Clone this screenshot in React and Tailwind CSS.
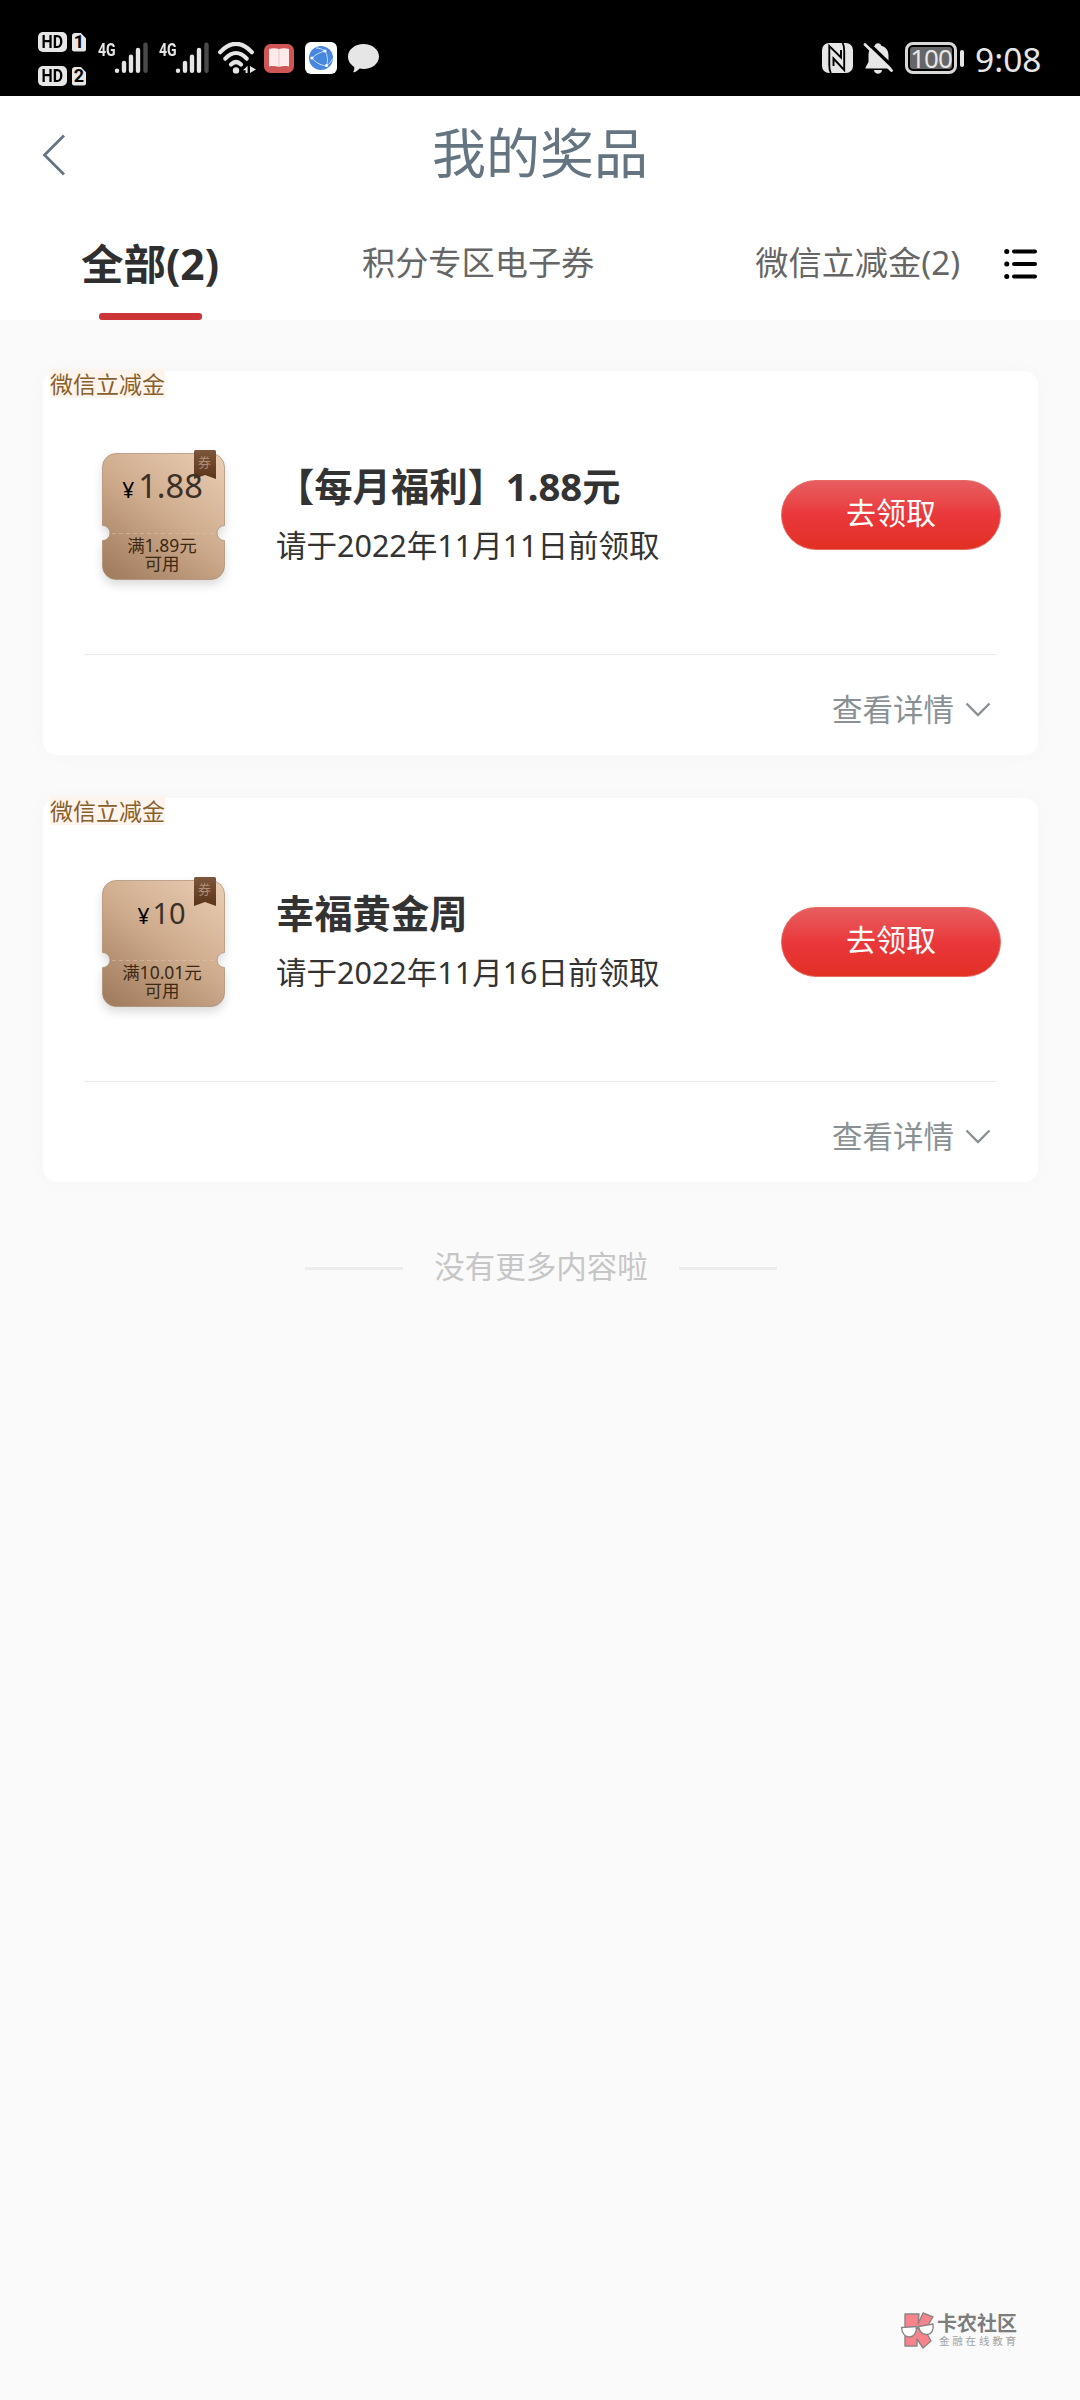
import { useState } from "react";

const tabs = [
  { id: "all",    label: "全部(2)" },
  { id: "points", label: "积分专区电子券" },
  { id: "wechat", label: "微信立减金(2)" },
];

const prizes = [
  { id: 1, tag: "微信立减金", amount: "1.88", limit: "满1.89元",  title: "【每月福利】1.88元", date: "请于2022年11月11日前领取", big: true },
  { id: 2, tag: "微信立减金", amount: "10",   limit: "满10.01元", title: "幸福黄金周",         date: "请于2022年11月16日前领取", big: false },
];

function HdBadge({ sim }) {
  return (
    <div className="flex items-center gap-[5px] h-[20px]">
      <span className="flex items-center justify-center w-[29px] h-[20px] rounded-[5px] bg-[#e6e6e6] text-black text-[18px] leading-none font-bold font-[Roboto,sans-serif]">
        <span className="scale-x-[0.88]">HD</span>
      </span>
      <span className="flex items-center justify-center w-[14px] h-[19px] rounded-[3px] [clip-path:polygon(0_0,60%_0,100%_30%,100%_100%,0_100%)] bg-[#e6e6e6] text-black text-[18px] leading-none font-bold font-[Roboto,sans-serif]">{sim}</span>
    </div>
  );
}

function Signal() {
  return (
    <div className="relative w-[50px] h-[32px]">
      <span className="absolute left-0 top-[1px] origin-left scale-x-[0.74] text-[#e6e6e6] text-[19px] leading-[14px] font-bold font-[Roboto,sans-serif]">4G</span>
      <svg width="50" height="32" viewBox="0 0 50 32" stroke="#e6e6e6" strokeWidth="4.4" strokeLinecap="round">
        <path d="M19 28.6v.2M26 21v7.8M33 14.7v14.1M40 8v20.8"/>
        <path d="M47.5 2.7v26.1" stroke="#4a4a4a"/>
      </svg>
    </div>
  );
}

function StatusBar() {
  return (
    <div className="flex h-24 bg-black pl-[38px] pr-[40px] justify-between">
      <div className="flex">
        <div className="flex flex-col gap-[14px] pt-[32px]">
          <HdBadge sim="1"/>
          <HdBadge sim="2"/>
        </div>
        <div className="flex gap-[11px] pt-[42px] pl-[12px]">
          <Signal/>
          <Signal/>
        </div>
        {/* Wifi */}
        <svg className="mt-[42px] ml-[9px]" width="38" height="32" viewBox="0 0 38 32" fill="none" stroke="#e6e6e6" strokeWidth="4.2" strokeLinecap="round">
          <path d="M2.2 10.2C12-1 24-1 33.8 10.2"/>
          <path d="M7.3 16.7c7-7.6 14.4-7.6 21.4 0"/>
          <path d="M13 22.6c3.4-3.4 6.6-3.4 10 0"/>
          <circle cx="18" cy="28.4" r="3.2" fill="#e6e6e6" stroke="none"/>
          <path d="M25 28.3l4.6-4.6V31h-2v-2.7zM32 24l6.2 3.5-6.2 3.5z" fill="#e6e6e6" stroke="none"/>
        </svg>
        {/* Reader app */}
        <svg className="mt-[44px] ml-[8px]" width="30" height="29" viewBox="0 0 30 29">
          <rect width="30" height="29" rx="6.5" fill="#cf5655"/>
          <path d="M5 5c3-1 7-1 10 0 3-1 7-1 10 0v17.500c-3-.6-7-.6-10 .5-3-1.100-7-1.100-10-.5z" fill="#fdeaea"/>
          <path d="M15 5v17.500" stroke="#f3b9b9" strokeWidth=".8"/>
        </svg>
        {/* Browser app */}
        <svg className="mt-[42px] ml-[11px]" width="32" height="32" viewBox="0 0 32 32">
          <rect width="32" height="32" rx="6" fill="#fff"/>
          <circle cx="16" cy="16" r="12" fill="#4787e0"/>
          <path d="M7 16C11 12 16 10 20 9c3 5 3 10 1.500 14.500M7 16c4 5 10 8 14.500 7.500M20 9c-3-2-6-3-9-3M21.500 23.500c3-1.500 5-4 6-7" fill="none" stroke="#c9defa" strokeWidth="1"/>
          <circle cx="20" cy="9" r="1.600" fill="#fff"/>
          <circle cx="7" cy="16" r="1.600" fill="#fff"/>
          <circle cx="21.500" cy="23.500" r="1.600" fill="#fff"/>
        </svg>
        {/* Message */}
        <svg className="mt-[44px] ml-[11px]" width="31" height="29" viewBox="0 0 31 29" fill="#e6e6e6">
          <path d="M15.5 0C24 0 31 5.5 31 12.5S24 25 15.5 25c-1.500 0-2.500-.1-3.800-.4C10 26.500 7.500 28.500 5 28.300c1.200-1.500 1.500-3.500 1.200-5.500C2.500 20.500 0 17 0 12.500 0 5.500 7 0 15.500 0z"/>
        </svg>
      </div>

      <div className="flex text-[#e6e6e6]">
        {/* NFC */}
        <svg className="mt-[43px]" width="31" height="30" viewBox="0 0 31 30">
          <rect width="31" height="30" rx="7" fill="#e6e6e6"/>
          <path d="M9 30C7.500 28 7.300 26 7.300 22V3L19 14.500V7" fill="none" stroke="#000" strokeWidth="1.900"/>
          <path d="M20.500 0c1.500 2 1.700 4 1.700 8v19L11.500 15.500V23" fill="none" stroke="#000" strokeWidth="1.900"/>
        </svg>
        {/* Muted bell */}
        <svg className="mt-[42px] ml-[10px]" width="31" height="33" viewBox="0 0 31 33" fill="#e6e6e6">
          <path d="M12 3.500C12 .5 18 .5 18 3.500c5 1.500 7.500 5 7.500 10V20l3 5.500v1H2.500v-1l3-5.500v-6.500c0-5 2-8.500 6.500-10z"/>
          <path d="M11 28h8c-.5 5-7.500 5-8 0z"/>
          <path d="M4.500 .5L32 27" stroke="#000" strokeWidth="3.400"/>
          <path d="M2 2.500l26.500 26" stroke="#e6e6e6" strokeWidth="2.800" strokeLinecap="round"/>
        </svg>
        {/* Battery */}
        <div className="flex items-center mt-[42px] ml-[11px] h-[32px] gap-[3px]">
          <div className="w-[52px] h-[32px] rounded-[8px] border-[3px] border-[#d8d8d8] p-[2px]">
            <div className="flex items-center justify-center h-full rounded-[3px] bg-[#666] text-[26px] leading-none font-['Noto_Sans',sans-serif] tracking-[-1px]">100</div>
          </div>
          <div className="w-[4px] h-[17px] rounded-[2px] bg-[#e6e6e6]"/>
        </div>
        <span className="mt-[39px] ml-[11px] w-[65px] text-[33.5px] leading-[40px] whitespace-nowrap font-['Noto_Sans',sans-serif]">9:08</span>
      </div>
    </div>
  );
}

function Coupon({ prize }) {
  const grad = `paper${prize.id}`;
  const rib  = `ribbon${prize.id}`;
  return (
    <div className="relative w-[123px] h-[127px] text-center">
      <svg className="absolute left-0 -top-[3px] overflow-visible drop-shadow-[0_5px_5px_rgba(0,0,0,0.14)]" width="123" height="130" viewBox="0 -3 123 130">
        <defs>
          <linearGradient id={grad} x1="0.85" y1="0" x2="0.15" y2="1">
            <stop offset="0" stopColor="#e8cab0"/>
            <stop offset="0.5" stopColor="#cdaa8b"/>
            <stop offset="1" stopColor="#a37e60"/>
          </linearGradient>
          <linearGradient id={rib} x1="0" y1="0" x2="0" y2="1">
            <stop offset="0" stopColor="#7d573c"/>
            <stop offset="1" stopColor="#5a3318"/>
          </linearGradient>
        </defs>
        <path d="M14 .5h95a13.5 13.5 0 0 1 13.5 13.5v58.5a7.500 7.500 0 0 0 0 15V113a13.5 13.5 0 0 1-13.5 13.5H14A13.5 13.5 0 0 1 .5 113V87.5a7.500 7.500 0 0 0 0-15V14A13.5 13.5 0 0 1 14 .5z" fill={`url(#${grad})`} stroke="#a98a70" strokeOpacity=".7"/>
        <path d="M10 80.5h103" stroke="#e3c8b0" strokeOpacity=".5" strokeDasharray="4 3"/>
        <path d="M92 -1.500q0-1.500 1.500-1.500h19q1.500 0 1.500 1.500V26l-11-4-11 4z" fill={`url(#${rib})`}/>
      </svg>
      <span className="absolute left-[96px] top-[2px] text-[13px] leading-[15px] text-[#b08f76]">券</span>
      {/* the larger amount sits a little higher than the short one */}
      <div className={`relative flex items-baseline justify-center text-[#3a3028] ${prize.big ? "pt-[13px] pr-[2px] gap-[4px]" : "pt-[13px] pr-[4px] gap-[3px]"}`}>
        <span className="text-[21px] leading-[40px] text-black">¥</span>
        <span className={prize.big ? "text-[32.5px] leading-[40px]" : "text-[29px] leading-[40px]"}>{prize.amount}</span>
      </div>
      <div className="absolute inset-x-0 top-[83px] text-[17.5px] leading-[18px] text-[#3d2814]">
        <p className="pr-[3px] whitespace-nowrap">{prize.limit}</p>
        <p className="pr-[3px]">可用</p>
      </div>
    </div>
  );
}

function PrizeCard({ prize }) {
  return (
    <div className="relative h-[384px] rounded-[14px] bg-white shadow-[0_0_22px_rgba(0,0,0,0.025)]">
      <span className="absolute left-[7px] -top-[2px] h-[29px] bg-[#fdf5ed] text-[23px] leading-[30px] text-[#89602b] whitespace-nowrap">{prize.tag}</span>

      <div className="flex h-[283px] pl-[59px] pt-[82px]">
        <Coupon prize={prize}/>
        <div className="ml-[51px] pt-[10px] w-[505px] text-[#333]">
          <h2 className="text-[38.3px] leading-[46px] font-bold whitespace-nowrap">{prize.title}</h2>
          <p className="mt-[16px] text-[30.5px] leading-[40px] whitespace-nowrap">{prize.date}</p>
        </div>
        <button className="mt-[27px] h-[70px] w-[220px] shrink-0 rounded-full bg-gradient-to-b from-[#e75d60] via-[#ea373b] to-[#e23023] border border-[#e46a62] text-white text-[30px] leading-none pb-[4px]">
          去领取
        </button>
      </div>

      <div className="mx-[42px] border-t border-[#e9e9e9]"/>

      <button className="flex items-center ml-auto mr-[47px] mt-[33px] text-[30.5px] leading-[42px] text-[#8a9195]">
        查看详情
        <svg className="ml-[11px]" width="26" height="16" viewBox="0 0 26 16" fill="none" stroke="#8a9195" strokeWidth="2.4">
          <path d="M1.500 2.500L13 14 24.500 2.500"/>
        </svg>
      </button>
    </div>
  );
}

function Watermark() {
  return (
    <div className="absolute left-[900px] top-[2312px] flex">
      <svg width="36" height="37" viewBox="0 0 36 37" stroke="#8b8587" strokeWidth="1.4" strokeLinejoin="round">
        <path d="M5 2h14l-1 10 5-11 10 4-8 13 6 11-8 7-6-9v7H5z" fill="#f9838b"/>
        <path d="M1.500 15.500l15-1c.5 6-2.500 10-7 10.500-4.500 0-7.500-4-8-9.500zM18.500 14.500l14.500-2.500c1 6-1.500 10-5.500 10.500-5 .5-8-3-9-8z" fill="#fff"/>
        <path d="M16 17q1.500-2 3 0" fill="none"/>
      </svg>
      <div className="ml-[1px] pt-[1px]">
        <p className="text-[20px] leading-[21px] font-bold text-[#7d7d7d]">卡农社区</p>
        <p className="pl-[2px] pt-[1px] text-[10.500px] leading-[13px] tracking-[2.800px] text-[#a3a3a3] whitespace-nowrap">金融在线教育</p>
      </div>
    </div>
  );
}

export default function App() {
  const [active, setActive] = useState("all");

  return (
    <div className="relative w-[1080px] h-[2400px] overflow-hidden bg-[#fafafa] font-['Noto_Sans','Noto_Sans_CJK_SC',sans-serif]">
      <StatusBar/>

      {/* Header */}
      <div className="h-[224px] bg-white">
        <div className="relative flex items-center justify-center h-[116px] pb-[3px]">
          <svg className="absolute left-[42px] top-[38px]" width="24" height="42" viewBox="0 0 24 42" fill="none" stroke="#647581" strokeWidth="2.8">
            <path d="M22 1.500L2.500 21 22 40.500"/>
          </svg>
          <h1 className="text-[54px] leading-[60px] text-[#647581]">我的奖品</h1>
        </div>

        <div className="flex h-[108px] pl-[81px]">
          {tabs.map(tab => (
            <button
              key={tab.id}
              onClick={() => setActive(tab.id)}
              className={`relative flex items-center justify-center shrink-0 whitespace-nowrap ${
                active === tab.id ? "mr-[143px] pb-[4px] text-[42.5px] font-bold text-[#2f2f2f] w-[138px]" : "mr-[161px] pb-[6px] text-[33.2px] text-[#666]"
              }`}
            >
              {tab.label}
              {active === tab.id && <span className="absolute left-[18px] bottom-0 w-[103px] h-[7px] rounded-[3px] bg-[#cb3538]"/>}
            </button>
          ))}
          <svg className="absolute left-[1004px] top-[248px]" width="34" height="32" viewBox="0 0 34 32" stroke="#000" strokeWidth="4" strokeLinecap="round">
            <path d="M10 3.500h21M10 16h21M10 28.500h21"/>
            <path d="M2.700 3.500h.1M2.700 16h.1M2.700 28.500h.1" strokeWidth="5"/>
          </svg>
        </div>
      </div>

      {/* Prize list */}
      <div className="flex flex-col gap-[42.5px] pt-[51px] pl-[43px] pr-[42px]">
        {prizes.map(prize => <PrizeCard key={prize.id} prize={prize}/>)}
      </div>

      {/* List end */}
      <div className="flex items-center justify-center mt-[63px] pl-[2px]">
        <span className="w-[98px] h-[3px] mt-[5px] bg-[#ececec]"/>
        <span className="mx-[31px] text-[30.5px] leading-[42px] text-[#c6c6c6]">没有更多内容啦</span>
        <span className="w-[98px] h-[3px] mt-[5px] bg-[#ececec]"/>
      </div>

      <Watermark/>
    </div>
  );
}
